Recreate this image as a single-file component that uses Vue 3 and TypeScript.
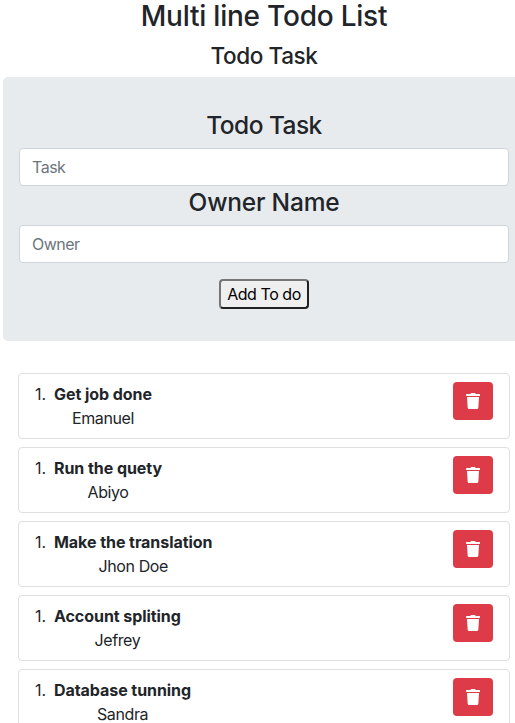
<script setup lang="ts">
import { ref } from 'vue'

interface Todo {
  title: string
  owner: string
}

const task = ref('')
const owner = ref('')
const todos = ref<Todo[]>([
  { title: 'Get job done', owner: 'Emanuel' },
  { title: 'Run the quety', owner: 'Abiyo' },
  { title: 'Make the translation', owner: 'Jhon Doe' },
  { title: 'Account spliting', owner: 'Jefrey' },
  { title: 'Database tunning', owner: 'Sandra' },
])

function addTodo() {
  if (!task.value.trim()) return
  todos.value.push({ title: task.value, owner: owner.value })
  task.value = ''
  owner.value = ''
}

function removeTodo(index: number) {
  todos.value.splice(index, 1)
}
</script>

<template>
  <main class="page">
    <h1 class="title">Multi line Todo List</h1>
    <h2 class="subtitle">Todo Task</h2>
    <form class="panel" @submit.prevent="addTodo">
      <label class="label" for="task">Todo Task</label>
      <input id="task" v-model="task" class="field" placeholder="Task" />
      <label class="label owner-label" for="owner">Owner Name</label>
      <input id="owner" v-model="owner" class="field" placeholder="Owner" />
      <button class="add" type="submit">Add To do</button>
    </form>
    <section class="list">
      <article v-for="(todo, i) in todos" :key="todo.title" class="item">
        <span class="number">1.</span>
        <div class="text">
          <strong class="name">{{ todo.title }}</strong>
          <span class="person">{{ todo.owner }}</span>
        </div>
        <button class="remove" type="button" @click="removeTodo(i)">
          <svg class="trash" width="14" height="16" viewBox="0 0 14 16" fill="#fff">
            <path d="M.4 1h3.900L4.800.3Q5 0 5.400 0h3.200Q9 0 9.200.3L9.700 1h3.900Q14 1 14 1.400V2.600Q14 3 13.600 3H.4Q0 3 0 2.600V1.400Q0 1 .4 1Z" />
            <path d="M1 4h12l-.7 10.700Q12.200 16 10.900 16H3.100Q1.800 16 1.700 14.700Z" />
          </svg>
        </button>
      </article>
    </section>
  </main>
</template>

<style>
body {
  background: #fff;
  overflow: hidden;
}
</style>

<style scoped>
.page,
.page * {
  box-sizing: border-box;
}
.page {
  width: 525px;
  height: 723px;
  overflow: hidden;
  padding-left: 3px;
  font-family: Inter, "Liberation Sans", sans-serif;
  font-size: 16px;
  line-height: 24px;
  color: #212529;
}
.title,
.subtitle {
  margin: 0;
  text-align: center;
  font-weight: 500;
}
.title {
  height: 38px;
  font-size: 28px;
  line-height: 33px;
  letter-spacing: -0.22px;
}
.subtitle {
  height: 39px;
  font-size: 22.5px;
  line-height: 36px;
  letter-spacing: -0.4px;
}
.panel {
  display: flex;
  flex-direction: column;
  align-items: center;
  height: 264px;
  padding: 32px 16px;
  border-radius: 5px;
  background: #e8ebee;
}
.label {
  height: 39px;
  font-size: 24.5px;
  line-height: 33px;
  font-weight: 500;
  letter-spacing: -0.55px;
}
.owner-label {
  letter-spacing: -0.2px;
}
.field {
  width: 490px;
  height: 38px;
  align-self: flex-start;
  padding: 6px 12px;
  border: 1px solid #ced4da;
  border-radius: 4px;
  background: #fff;
  font: inherit;
  letter-spacing: -0.5px;
  color: #495057;
  outline: none;
}
.field::placeholder {
  color: #6c757d;
  opacity: 1;
}
.add {
  width: 90px;
  height: 30px;
  margin-top: 16px;
  padding: 0;
  border: 2px solid;
  border-color: #767676 #212121 #212121 #767676;
  border-radius: 4px;
  background: #efefef;
  font: inherit;
  letter-spacing: -0.45px;
  color: #000;
}
.list {
  display: flex;
  flex-direction: column;
  gap: 8px;
  padding: 32px 0 0 15px;
}
.item {
  display: flex;
  align-items: flex-start;
  flex: none;
  width: 492px;
  height: 66px;
  padding: 8px 16px;
  border: 1px solid #dfdfdf;
  border-radius: 4px;
}
.number {
  width: 19px;
  letter-spacing: -0.1px;
}
.text {
  display: flex;
  flex-direction: column;
  align-items: center;
}
.name {
  font-weight: 700;
  letter-spacing: -0.06px;
}
.person {
  letter-spacing: -0.4px;
}
.remove {
  display: flex;
  align-items: center;
  justify-content: center;
  width: 40px;
  height: 38px;
  margin-left: auto;
  padding: 0;
  border: 0;
  border-radius: 4px;
  background: #dc3b47;
}
</style>
